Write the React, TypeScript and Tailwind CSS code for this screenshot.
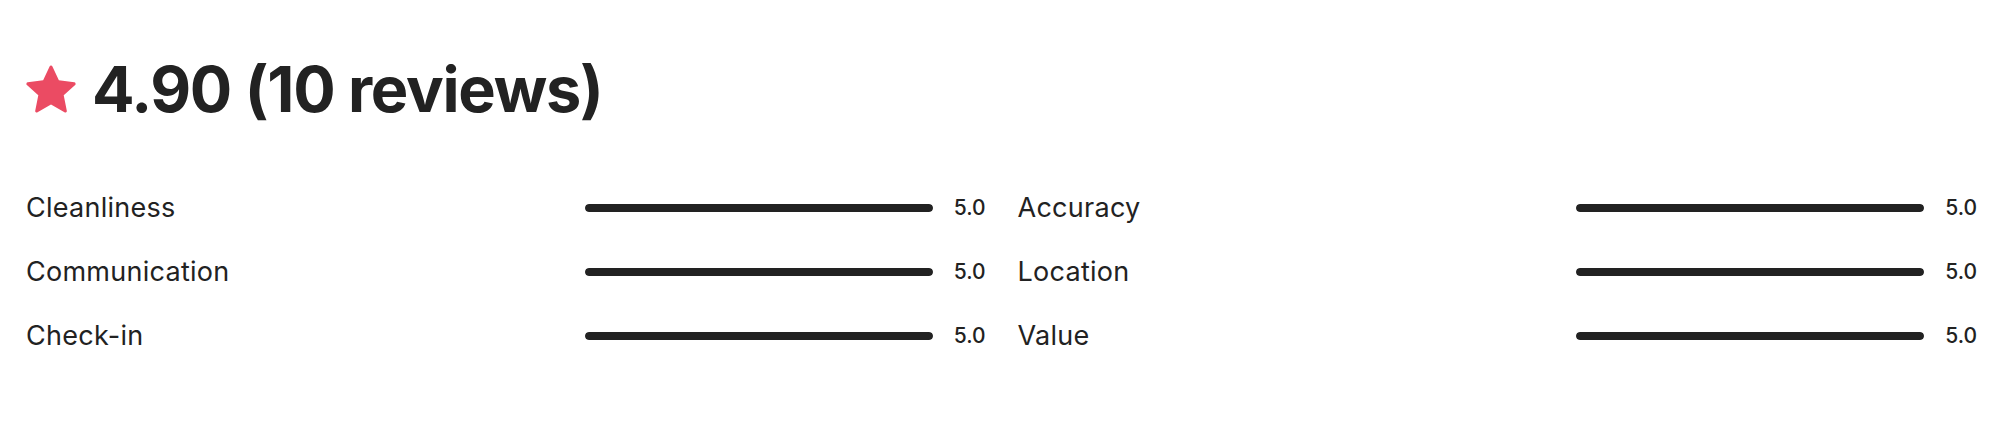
import React from 'react';

const categories = [
  { label: 'Cleanliness', score: '5.0', pct: 100 },
  { label: 'Accuracy', score: '5.0', pct: 100 },
  { label: 'Communication', score: '5.0', pct: 100 },
  { label: 'Location', score: '5.0', pct: 100 },
  { label: 'Check-in', score: '5.0', pct: 100 },
  { label: 'Value', score: '5.0', pct: 100 },
];

const StarIcon = ({ className }: { className?: string }) => (
  <svg viewBox="0 0 32 32" className={className} aria-hidden="true" fill="currentColor">
    <path d="M15.1 1.58l-4.13 8.88-9.86 1.27a1 1 0 0 0-.54 1.74l7.3 6.57-1.97 9.85a1 1 0 0 0 1.48 1.06l8.62-5 8.63 5a1 1 0 0 0 1.48-1.06l-1.97-9.85 7.3-6.57a1 1 0 0 0-.55-1.73l-9.86-1.28-4.12-8.88a1 1 0 0 0-1.82 0z" />
  </svg>
);

const RatingRow = ({ label, score, pct }: { label: string; score: string; pct: number }) => (
  <div className="flex items-center h-[64px]">
    <div className="flex-1 pl-[1px] text-[27px] tracking-[0.01em] text-[#222222]">{label}</div>
    <div className="w-[348px] h-[8px] rounded-full bg-[#dddddd] overflow-hidden">
      <div className="h-full rounded-full bg-[#222222]" style={{ width: `${pct}%` }} />
    </div>
    <div className="ml-[16px] w-[37px] text-right text-[21px] font-medium text-[#222222]">{score}</div>
  </div>
);

export default function App() {
  return (
    <div className="w-full h-[448px] bg-white pl-[25px] pr-[29px] pt-[52px] font-['Inter',sans-serif]">
      <h2 className="flex items-center h-[74px] text-[63px] font-bold text-[#222222] tracking-[-0.02em] leading-none">
        <StarIcon className="w-[50px] h-[50px] ml-[1px] mr-[16px] text-[#eb4b63]" />
        <span>4.90 (10 reviews)</span>
      </h2>
      <div className="grid grid-cols-2 gap-x-[31px] mt-[50px]">
        {categories.map((c) => (
          <RatingRow key={c.label} {...c} />
        ))}
      </div>
    </div>
  );
}
